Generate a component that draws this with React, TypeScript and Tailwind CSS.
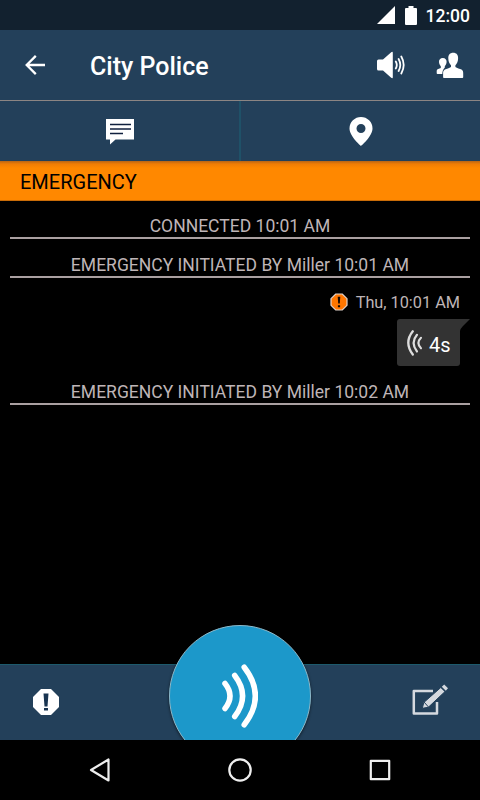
import type { ReactNode } from "react";

function StatusBar() {
  return (
    <div className="flex h-[30px] items-center justify-end bg-[#12212f] pr-[10px]">
      <svg width="18" height="18" viewBox="0 0 18 18" className="mr-[10px]" fill="#fff">
        <path d="M18 0V18H0Z" />
      </svg>
      <svg width="12" height="19" viewBox="0 0 12 19" className="mr-[9px]" fill="#fff">
        <path d="M3.5 0h5v2H11a1 1 0 0 1 1 1v15a1 1 0 0 1-1 1H1a1 1 0 0 1-1-1V3a1 1 0 0 1 1-1h2.5z" />
      </svg>
      <span className="mt-[2px] text-[17.5px] leading-5 font-medium text-white">12:00</span>
    </div>
  );
}

function AppBar() {
  return (
    <div className="flex h-[71px] items-center border-b border-[#8c8583] bg-[#23405a]">
      <svg width="20" height="20" viewBox="0 0 20 20" className="ml-[25px]" fill="none" stroke="#fff" strokeWidth="2.3">
        <path d="M20 10H2M10.8 .9L1.7 10l9.1 9.1" />
      </svg>
      <h1 className="ml-[45px] mt-[3px] flex-1 text-[25px] leading-8 font-medium text-white">City Police</h1>
      <svg width="28" height="28" viewBox="0 0 28 28" className="mr-[31px]">
        <path d="M1.5 8.5H6L14.2 1.2q1.6-1.2 1.6.6v24.4q0 1.8-1.6.6L6 19.5H1.5Q0 19.5 0 18V10Q0 8.5 1.5 8.5z" fill="#fff" />
        <path d="M18.8 10.5q2 3.5 0 7M21.6 8q3.4 6 0 12M24.3 5.5q4.8 8.5 0 17" fill="none" stroke="#fff" strokeWidth="1.8" strokeLinecap="round" />
      </svg>
      <svg width="28" height="27" viewBox="0 0 28 27" className="mr-[16px]" fill="#fff">
        <path d="M6.8 6c2.6 0 3.8 1.8 3.8 3.8 0 1.900-.8 3.500-1.800 4.400v1.300C7 17.500 6.300 19.500 6.300 22H1.500q-.8 0-.8-.8v-2.200c0-1.600 1-2 4.100-3v-1.800c-1-.9-1.800-2.500-1.800-4.400C3 7.800 4.200 6 6.800 6z" />
        <path d="M17.200 .8c3.300 0 5 2.200 4.900 5.400-.1 3.500-1.200 5.700-2.700 7v1.800c1.700 1.400 4.300 1.600 6.100 2.500 1.300.7 1.700 2 1.700 3.800v4q0 .8-.8.800H7.900q-.8 0-.8-.8v-4c0-1.800.5-3.100 1.800-3.800 1.700-.9 4.400-1.100 6.100-2.500v-1.800c-1.500-1.300-2.600-3.500-2.700-7C12.200 3 13.900.8 17.200.8z" />
      </svg>
    </div>
  );
}

function Tabs() {
  return (
    <div className="flex h-[60px] bg-[#23405a]">
      <div className="flex flex-1 items-center justify-center border-r-2 border-[#1f5168]">
        <svg width="28" height="26" viewBox="0 0 28 26" className="mt-px ml-px">
          <path d="M0 0H28V20.5H9.5L4 25.5V20.5H0z" fill="#fff" />
          <path d="M4 5.5H25M4 10H25M4 14.5H17" stroke="#10203f" strokeWidth="1.5" />
        </svg>
      </div>
      <div className="flex flex-1 items-center justify-center">
        <svg width="24" height="29" viewBox="0 0 24 29" className="ml-px">
          <path fillRule="evenodd" d="M12 0a11.5 11.5 0 0 1 11.5 11.5C23.5 19.5 12 29 12 29S.5 19.5.5 11.5A11.5 11.5 0 0 1 12 0zm0 7a4.5 4.5 0 1 0 0 9 4.5 4.5 0 0 0 0-9z" fill="#fff" />
        </svg>
      </div>
    </div>
  );
}

function LogLine({ children }: { children: ReactNode }) {
  return (
    <div className="mx-[10px] flex h-[27px] items-start justify-center border-b-2 border-[#aaa0a1] text-[17.55px] leading-[28px] text-[#bfb5b7]">
      {children}
    </div>
  );
}

function VoiceMessage() {
  return (
    <div className="flex flex-col items-end">
      <div className="mr-[20px] flex h-[26px] items-center text-[16.3px] text-[#bfb5b7]">
        <svg width="18" height="18" viewBox="0 0 18 18" className="mr-[8px]">
          <path d="M5.7 1h6.6L17 5.700v6.600L12.300 17H5.700L1 12.300V5.700z" fill="#ff7600" stroke="#e3d5cd" strokeWidth="1.2" />
          <path d="M7.700 3.800h2.600l-.5 6.800H8.200zM7.900 12.200h2.200v2H7.900z" fill="#170900" />
        </svg>
        <span className="mt-[2px]">Thu, 10:01 AM</span>
      </div>
      <div className="mt-[4px] mr-[10px] flex">
        <div className="flex h-[47px] w-[63px] items-center rounded-l-[3px] rounded-br-[3px] bg-[#333] pl-[10px] text-[20px] text-white">
          <svg width="16" height="26" viewBox="0 0 16 26" fill="none" stroke="#dedede" strokeLinecap="round" className="mr-[6px]">
            <path d="M5.8 1.3Q-3.2 12.5 5.8 24.5" strokeWidth="2.3" />
            <path d="M10 4.8Q3.2 12.8 10 21.5" strokeWidth="2.2" />
            <path d="M14 7.8Q8.8 13 14 18.3" strokeWidth="2.1" />
          </svg>
          <span className="mt-[5px]">4s</span>
        </div>
        <svg width="10" height="12" viewBox="0 0 10 12" fill="#333">
          <path d="M0 0H10L3 7Q.5 9.5 0 12z" />
        </svg>
      </div>
    </div>
  );
}

function Footer() {
  return (
    <div className="relative flex h-[76px] items-center justify-between border-t border-[#1d5a6c] bg-[#23405a] pr-[32px] pl-[33px]">
      <svg width="26" height="26" viewBox="0 0 26 26" className="-mt-px">
        <path d="M8 0H18L26 8V18L18 26H8L0 18V8z" fill="#fff" />
        <path d="M10.500 4.500h5l-1 13h-3zM11 19h4v2.500h-4z" fill="#193551" />
      </svg>
      <svg width="36" height="32" viewBox="0 0 36 32" className="-mt-[6px]">
        <path d="M25 18V29.500H1.800V7H21" fill="none" stroke="#d5d9df" strokeWidth="2.5" strokeLinejoin="round" />
        <path d="M10.300 24.300L11.800 18.500 28.800 3.500 33 7.600 16.300 23.300z" fill="#d5d9df" stroke="#23405a" strokeWidth="1" />
        <path d="M29.800 2.800L32.200.5 36 4.300 33.800 6.700z" fill="#d5d9df" />
        <path d="M12 18l4.500 5M28.500 2.500l5 5" stroke="#23405a" strokeWidth="1" />
      </svg>
      {/* talk button rises over the bar and is cut off at its bottom edge */}
      <div className="absolute bottom-0 left-1/2 h-[119px] w-[150px] -translate-x-1/2 overflow-hidden pt-[4px]">
        <button className="mx-auto flex size-[142px] items-center justify-center rounded-full border border-[#8db8c9] bg-[#1c98ca] shadow-[0_1px_3px_rgba(0,0,0,0.6)]">
          <svg width="36" height="64" viewBox="0 0 36 64" fill="none" stroke="#fff" strokeWidth="5.5" strokeLinecap="round">
            <path d="M3 19.5Q13 32 3 44.5" />
            <path d="M12.7 11.5Q28.5 32 12.7 52.5" />
            <path d="M22.2 3.2Q44.5 32 22.2 60.8" />
          </svg>
        </button>
      </div>
    </div>
  );
}

function NavBar() {
  return (
    <div className="flex h-[60px] items-center justify-between bg-black px-[88px]">
      <svg width="24" height="26" viewBox="0 0 24 26" fill="none" stroke="#eee" strokeWidth="2.2" strokeLinejoin="round">
        <path d="M20.5 2.5V23.5L3 13z" />
      </svg>
      <svg width="26" height="26" viewBox="0 0 26 26" fill="none" stroke="#eee" strokeWidth="2.2">
        <circle cx="13" cy="13" r="10.7" />
      </svg>
      <svg width="24" height="24" viewBox="0 0 24 24" fill="none" stroke="#eee" strokeWidth="2.2" strokeLinejoin="round">
        <path d="M2.8 2.8H21.2V21.2H2.8z" />
      </svg>
    </div>
  );
}

export default function App() {
  return (
    <div className="flex h-[800px] w-[480px] flex-col overflow-hidden bg-black font-['Roboto',sans-serif]">
      <StatusBar />
      <AppBar />
      <Tabs />
      <div className="h-[40px] border-b border-[#c96c08] bg-[linear-gradient(#b96515,#f07d04_3px,#ff8800_7px)] pl-[20px] text-[20px] leading-[42px] text-black">
        EMERGENCY
      </div>
      <div className="flex flex-1 flex-col pt-[11px]">
        <LogLine>CONNECTED 10:01 AM</LogLine>
        <div className="h-[12px]" />
        <LogLine>EMERGENCY INITIATED BY Miller 10:01 AM</LogLine>
        <div className="h-[11px]" />
        <VoiceMessage />
        <div className="h-[12px]" />
        <LogLine>EMERGENCY INITIATED BY Miller 10:02 AM</LogLine>
      </div>
      <Footer />
      <NavBar />
    </div>
  );
}
